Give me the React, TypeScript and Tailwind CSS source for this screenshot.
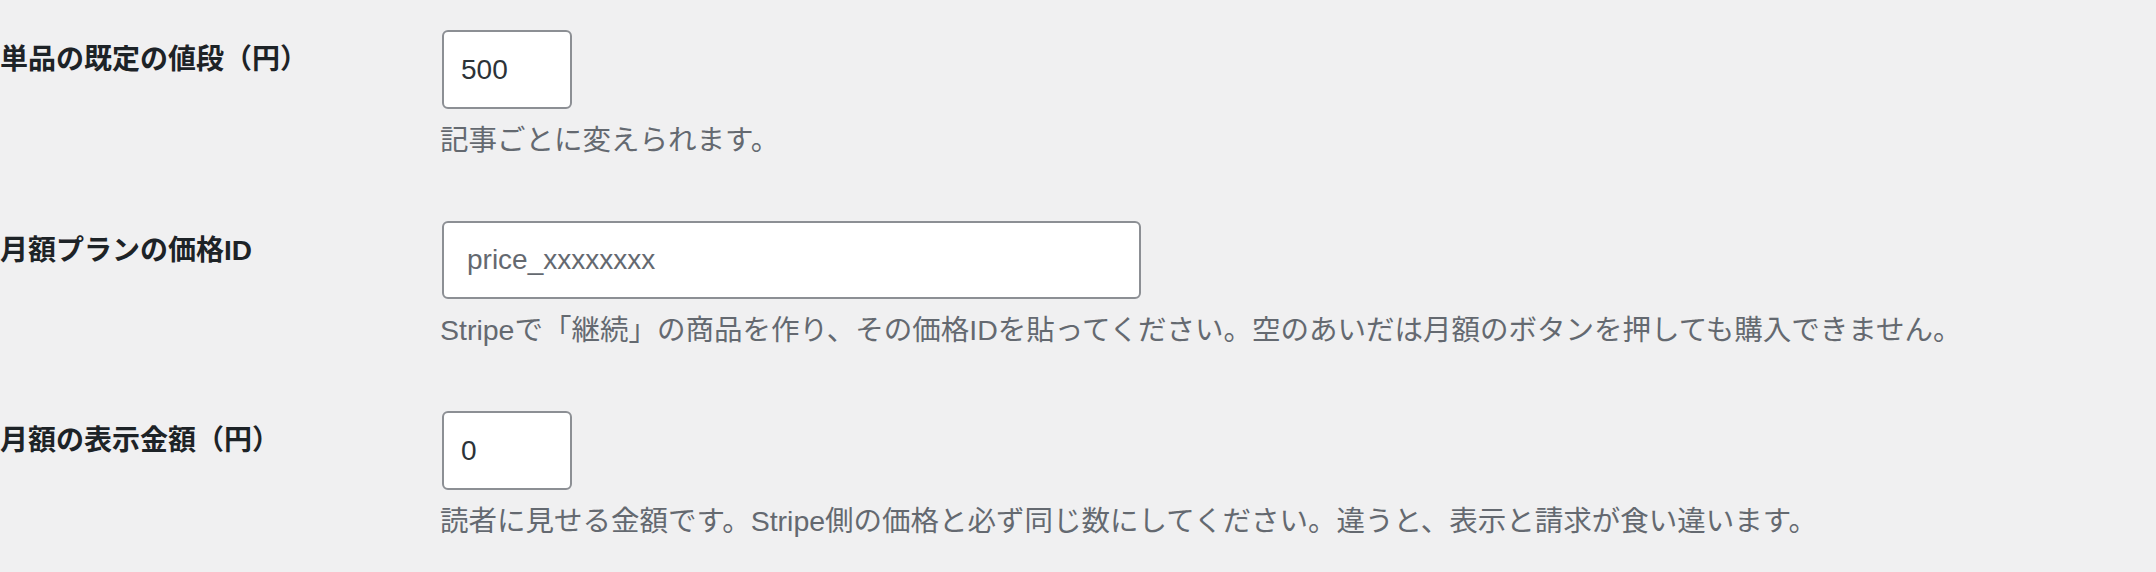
import React from "react";

const font = { fontFamily: '"Liberation Sans", "Noto Sans CJK JP", sans-serif' };

function Row({
  label,
  children,
  desc,
}: {
  label: string;
  children: React.ReactNode;
  desc: string;
}) {
  return (
    <div className="flex">
      <div className="w-[442px] shrink-0 pt-[42px] text-[28px] leading-[36px] font-bold text-[#1d2327]">
        {label}
      </div>
      <div className="flex flex-col items-start pt-[30px] pb-[33px]">
        {children}
        <p className="mt-[13px] -ml-[2px] text-[28.5px] leading-[36px] text-[#646970] whitespace-nowrap">{desc}</p>
      </div>
    </div>
  );
}

export default function App() {
  return (
    <div className="w-[2156px] h-[572px] bg-[#f0f0f1] overflow-hidden" style={font}>
      <Row label="単品の既定の値段（円）" desc="記事ごとに変えられます。">
        <input
          type="text"
          defaultValue="500"
          className="w-[130px] h-[79px] bg-white border-2 border-[#8c8f94] rounded-[6px] pl-[17px] pr-[4px] text-[28px] text-[#2c3338] outline-none"
          style={font}
        />
      </Row>
      <Row
        label="月額プランの価格ID"
        desc="Stripeで「継続」の商品を作り、その価格IDを貼ってください。空のあいだは月額のボタンを押しても購入できません。"
      >
        <input
          type="text"
          placeholder="price_xxxxxxxx"
          className="w-[699px] h-[78px] bg-white border-2 border-[#8c8f94] rounded-[6px] pl-[23px] pr-[8px] text-[28px] text-[#2c3338] placeholder:text-[#646970] outline-none"
          style={font}
        />
      </Row>
      <Row
        label="月額の表示金額（円）"
        desc="読者に見せる金額です。Stripe側の価格と必ず同じ数にしてください。違うと、表示と請求が食い違います。"
      >
        <input
          type="text"
          defaultValue="0"
          className="w-[130px] h-[79px] bg-white border-2 border-[#8c8f94] rounded-[6px] pl-[17px] pr-[4px] text-[28px] text-[#2c3338] outline-none"
          style={font}
        />
      </Row>
    </div>
  );
}
